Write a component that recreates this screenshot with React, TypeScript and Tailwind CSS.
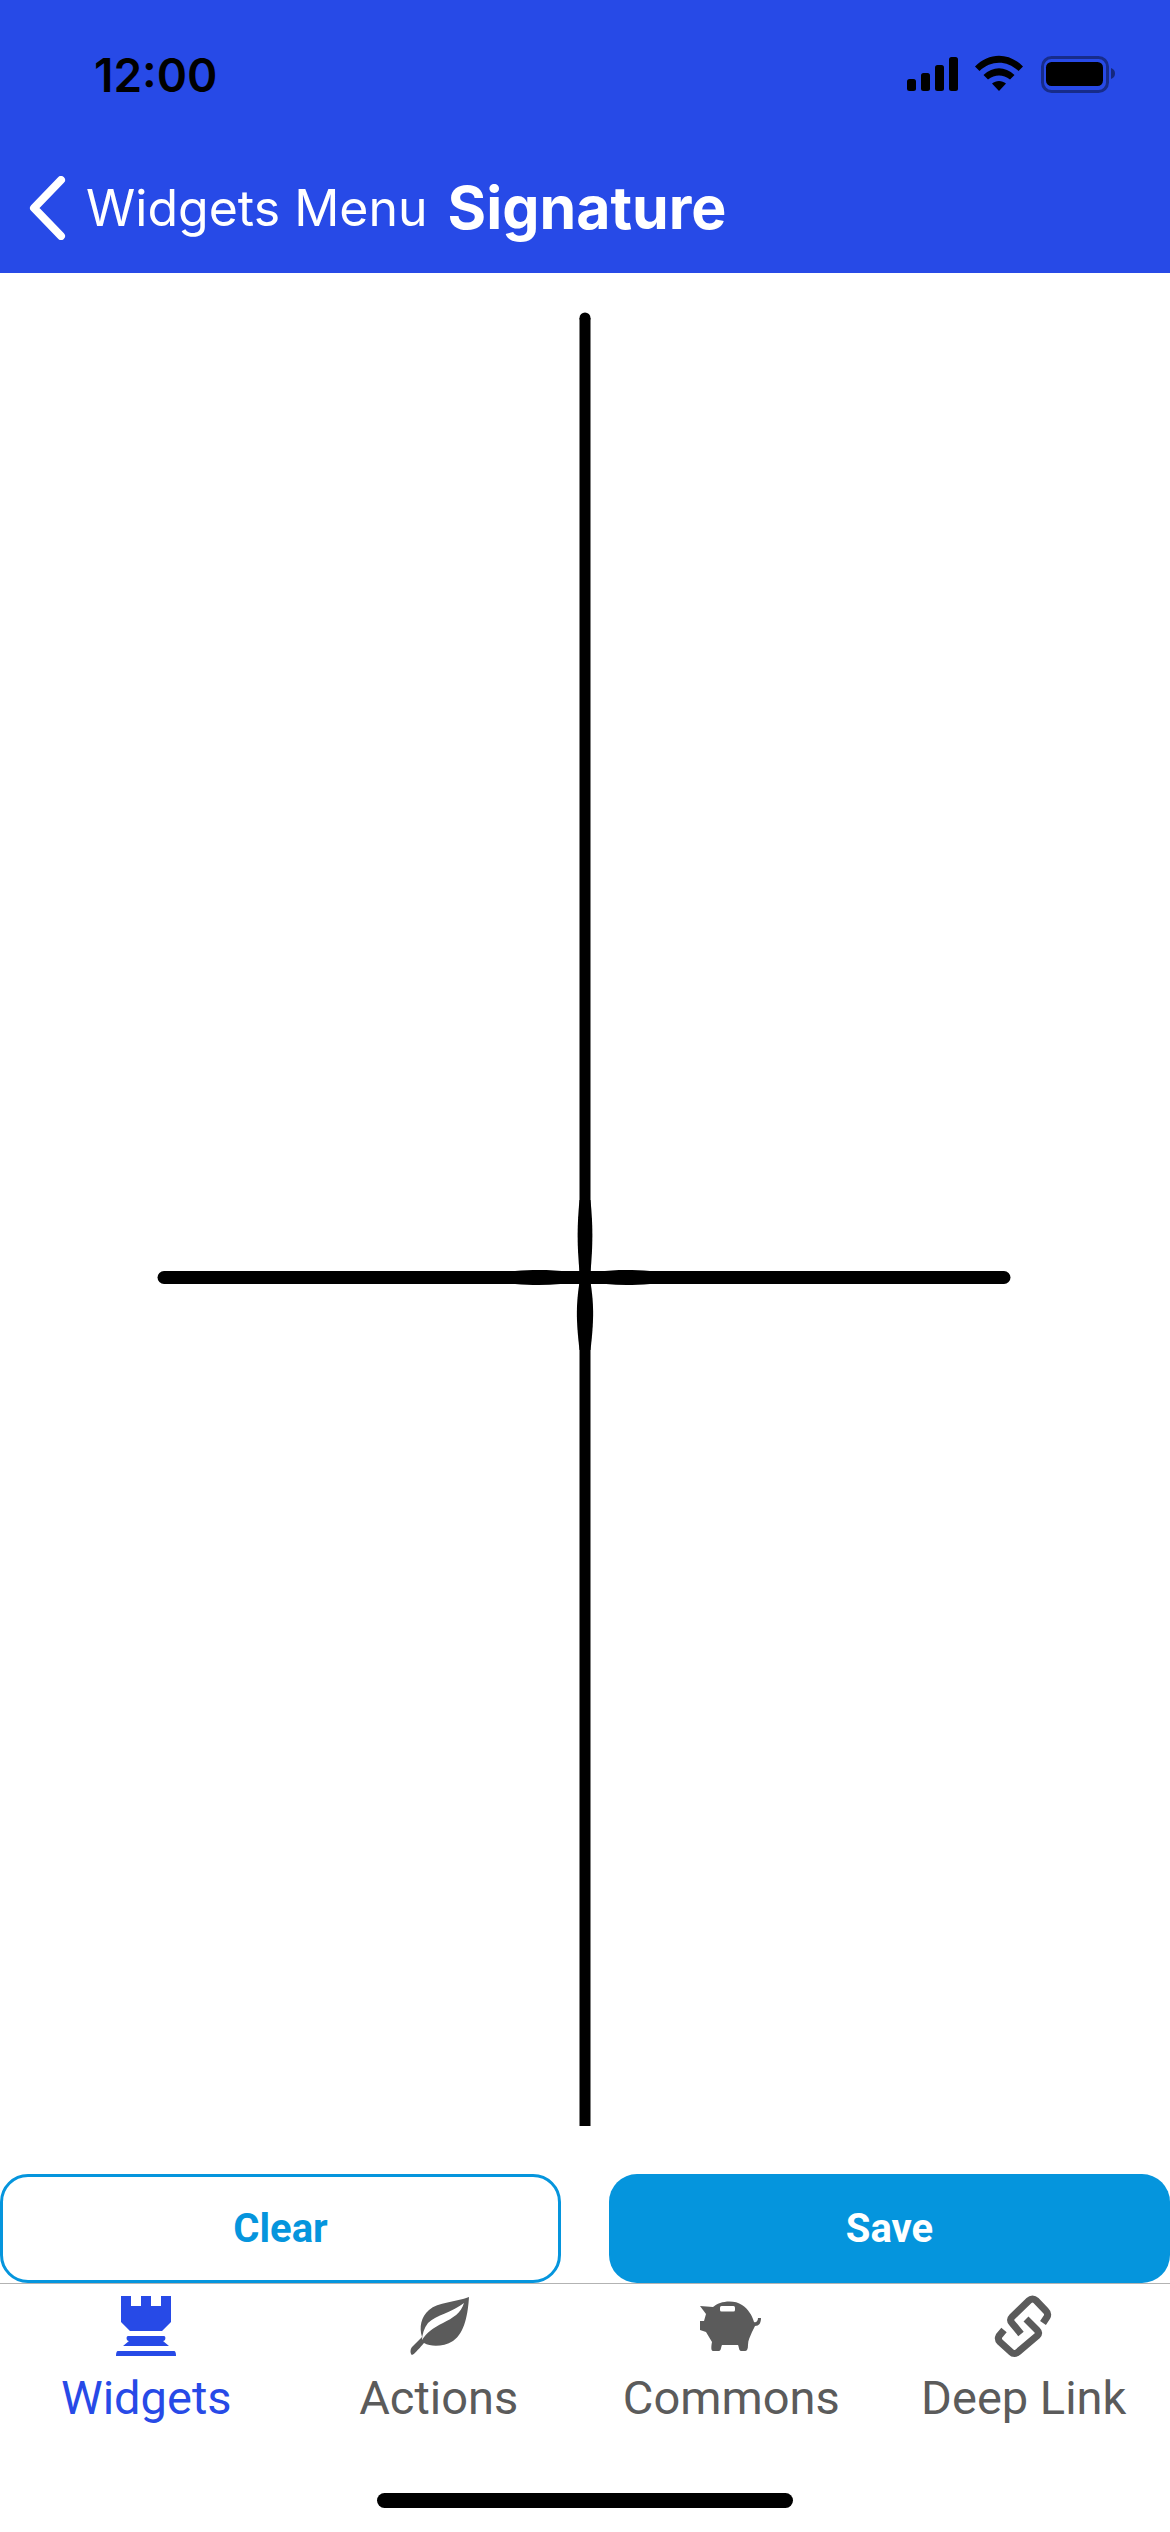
const tabs = ["Widgets", "Actions", "Commons", "Deep Link"];

function StatusIcons() {
  return (
    <svg width="210" height="38" viewBox="907 55 210 38" className="block">
      <rect x="907" y="79" width="9" height="12" rx="2.5" fill="#000" />
      <rect x="921" y="73" width="9" height="18" rx="2.5" fill="#000" />
      <rect x="935" y="65" width="9" height="26" rx="2.5" fill="#000" />
      <rect x="949" y="57" width="9" height="34" rx="2.5" fill="#000" />
      <path d="M975 66.500 C 989 52, 1009 52, 1023 66.500 L 1018.500 71 C 1007 60, 991 60, 979.500 71 Z" fill="#000" />
      <path d="M983.500 75 C 993 66, 1005 66, 1014.500 75 L 1010 79.500 C 1003 74, 995 74, 988 79.500 Z" fill="#000" />
      <path d="M992 83.500 C 996 80, 1002 80, 1006 83.500 L 999 91 Z" fill="#000" />
      <rect x="1042.500" y="57.500" width="65" height="34" rx="9" fill="none" stroke="#000" strokeOpacity="0.4" strokeWidth="3" />
      <rect x="1046" y="62" width="57" height="24" rx="5.500" fill="#000" />
      <path d="M1111 68 C 1114 69, 1115 71, 1115 73.500 C 1115 76, 1114 78, 1111 79 Z" fill="#000" fillOpacity="0.45" />
    </svg>
  );
}

function RookIcon({ color }: { color: string }) {
  return (
    <svg width="60" height="60" viewBox="0 0 60 60" fill={color}>
      <path d="M5 0H15V10H25V0H35V10H45V0H55V26L46 35H14L5 26Z" />
      <path d="M12 40H48C50 40 50 45 47 45L53 50H7L13 45C10 45 10 40 12 40Z" />
      <path d="M2 55H58C59 55 60 56 60 60H0C0 56 1 55 2 55Z" />
    </svg>
  );
}

function LeafIcon({ color }: { color: string }) {
  return (
    <svg width="60" height="60" viewBox="18 11 60 60" fill={color}>
      <path d="M78 12C65 17 47 17 38 25C30 32 28 42 31 52L21 62C19 64 19 69 21 70C23 70 33 58 33 58C40 62 52 62 62 56C74 48 77 28 78 12Z" />
      <path d="M73 18C62 27 45 30 37 38C33 43 31 50 31 55C36 47 42 43 52 38C62 33 70 28 73 18Z" fill="#fff" />
    </svg>
  );
}

function PigIcon({ color }: { color: string }) {
  return (
    <svg width="62" height="60" viewBox="11 11 62 60" fill={color}>
      <path d="M11 36H15L17 29L11 21L24 22C30 16 45 14 53 20C59 24 63 30 65 37C67 38 69 36 69 33L72 33C72 38 70 41 66 41L63 47C61 52 59 55 59 60C59 64 58 66 56 66H52C50 66 50 62 49 60H33C32 62 32 66 30 66H24C22 66 22 62 23 57L17 47L11 45Z" />
      <rect x="31" y="21" width="15" height="5.500" rx="1.500" fill="#fff" />
    </svg>
  );
}

function LinkIcon({ color }: { color: string }) {
  return (
    <svg width="60" height="64" viewBox="15 8 60 64" fill="none" stroke={color} strokeWidth="7">
      <path d="M64 37L68 31C69 29 69 27 67 25L57 14.500C55 12.500 52 12.500 50 14.500L33 31C31 33 31 35 33 37L42 48" />
      <path d="M47 33L58 44C60 46 60 48 58 50L39 66C37 68 34 68 32 66L21 56C19 54 19 52 20 50L25 44" />
    </svg>
  );
}

function TabIcon({ index, color }: { index: number; color: string }) {
  if (index === 0) return <RookIcon color={color} />;
  if (index === 1) return <LeafIcon color={color} />;
  if (index === 2) return <PigIcon color={color} />;
  return <LinkIcon color={color} />;
}

function SignatureDrawing() {
  return (
    <svg width="1170" height="1901" viewBox="0 273 1170 1901" className="block">
      <circle cx="585" cy="318" r="5.500" fill="#000" />
      <path d="M585 318V2126" stroke="#000" strokeWidth="11" fill="none" />
      <path d="M164 1277.500H1004" stroke="#000" strokeWidth="13" strokeLinecap="round" fill="none" />
      {/* spots where the pen slowed down near the crossing */}
      <path d="M579.500 1200C577 1225 577 1245 579.500 1272H590.500C593 1245 593 1225 590.500 1200Z" fill="#000" />
      <path d="M579.500 1282C576 1305 576 1320 579.500 1350H590.500C594 1320 594 1305 590.500 1282Z" fill="#000" />
      <path d="M515 1271C540 1269 560 1270 582 1274V1281C560 1285 540 1286 515 1284Z" fill="#000" />
      <path d="M588 1274C605 1270 625 1269 650 1271V1284C625 1286 605 1285 588 1281Z" fill="#000" />
      <rect x="572" y="1273" width="26" height="9" fill="#000" />
    </svg>
  );
}

export default function App() {
  return (
    <div className="flex h-[2532px] w-[1170px] flex-col overflow-hidden bg-white font-['Roboto',sans-serif]">
      <header className="h-[273px] shrink-0 bg-[#274ae7]">
        <div className="flex h-[158px] items-start justify-between pr-[53px] pl-[94px]">
          <span className="mt-[50px] font-['Inter',sans-serif] text-[46px] leading-[50px] font-semibold text-black">12:00</span>
          <div className="mt-[55px]">
            <StatusIcons />
          </div>
        </div>
        <div className="flex h-[100px] items-center pl-[29px] font-['Inter',sans-serif] text-white">
          <svg width="38" height="64" viewBox="0 0 38 64" fill="none" stroke="#fff" strokeWidth="8" strokeLinecap="round" strokeLinejoin="round">
            <path d="M32 4L5 32L32 60" />
          </svg>
          <span className="ml-[19px] text-[50px] leading-[60px] font-normal">Widgets Menu</span>
          <span className="ml-[20px] text-[59px] leading-[60px] font-bold">Signature</span>
        </div>
      </header>

      <main className="min-h-0 flex-1">
        <SignatureDrawing />
      </main>

      <div className="flex h-[109px] shrink-0 justify-between">
        <button className="flex w-[561px] items-center justify-center rounded-[28px] border-[3px] border-[#0595dd] bg-white text-[40px] font-bold text-[#0595dd]">
          Clear
        </button>
        <button className="flex w-[561px] items-center justify-center rounded-[28px] bg-[#0595dd] text-[40px] font-bold text-white">
          Save
        </button>
      </div>

      <nav className="flex h-[249px] shrink-0 flex-col border-t-[1px] border-[#b3b3b3]">
        <div className="flex pt-[10px]">
          {tabs.map((tab, i) => {
            const color = i === 0 ? "#274ae7" : "#5b5b5b";
            return (
              <div key={tab} className="flex flex-1 flex-col items-center">
                <div className="flex h-[64px] items-center justify-center">
                  <TabIcon index={i} color={color} />
                </div>
                <span className={`mt-[15px] text-[47px] leading-[50px] ${i === 0 ? "text-[#274ae7]" : "text-[#5b5b5b]"}`}>{tab}</span>
              </div>
            );
          })}
        </div>
        <div className="mt-[70px] flex justify-center">
          <div className="h-[15px] w-[416px] rounded-full bg-black" />
        </div>
      </nav>
    </div>
  );
}
